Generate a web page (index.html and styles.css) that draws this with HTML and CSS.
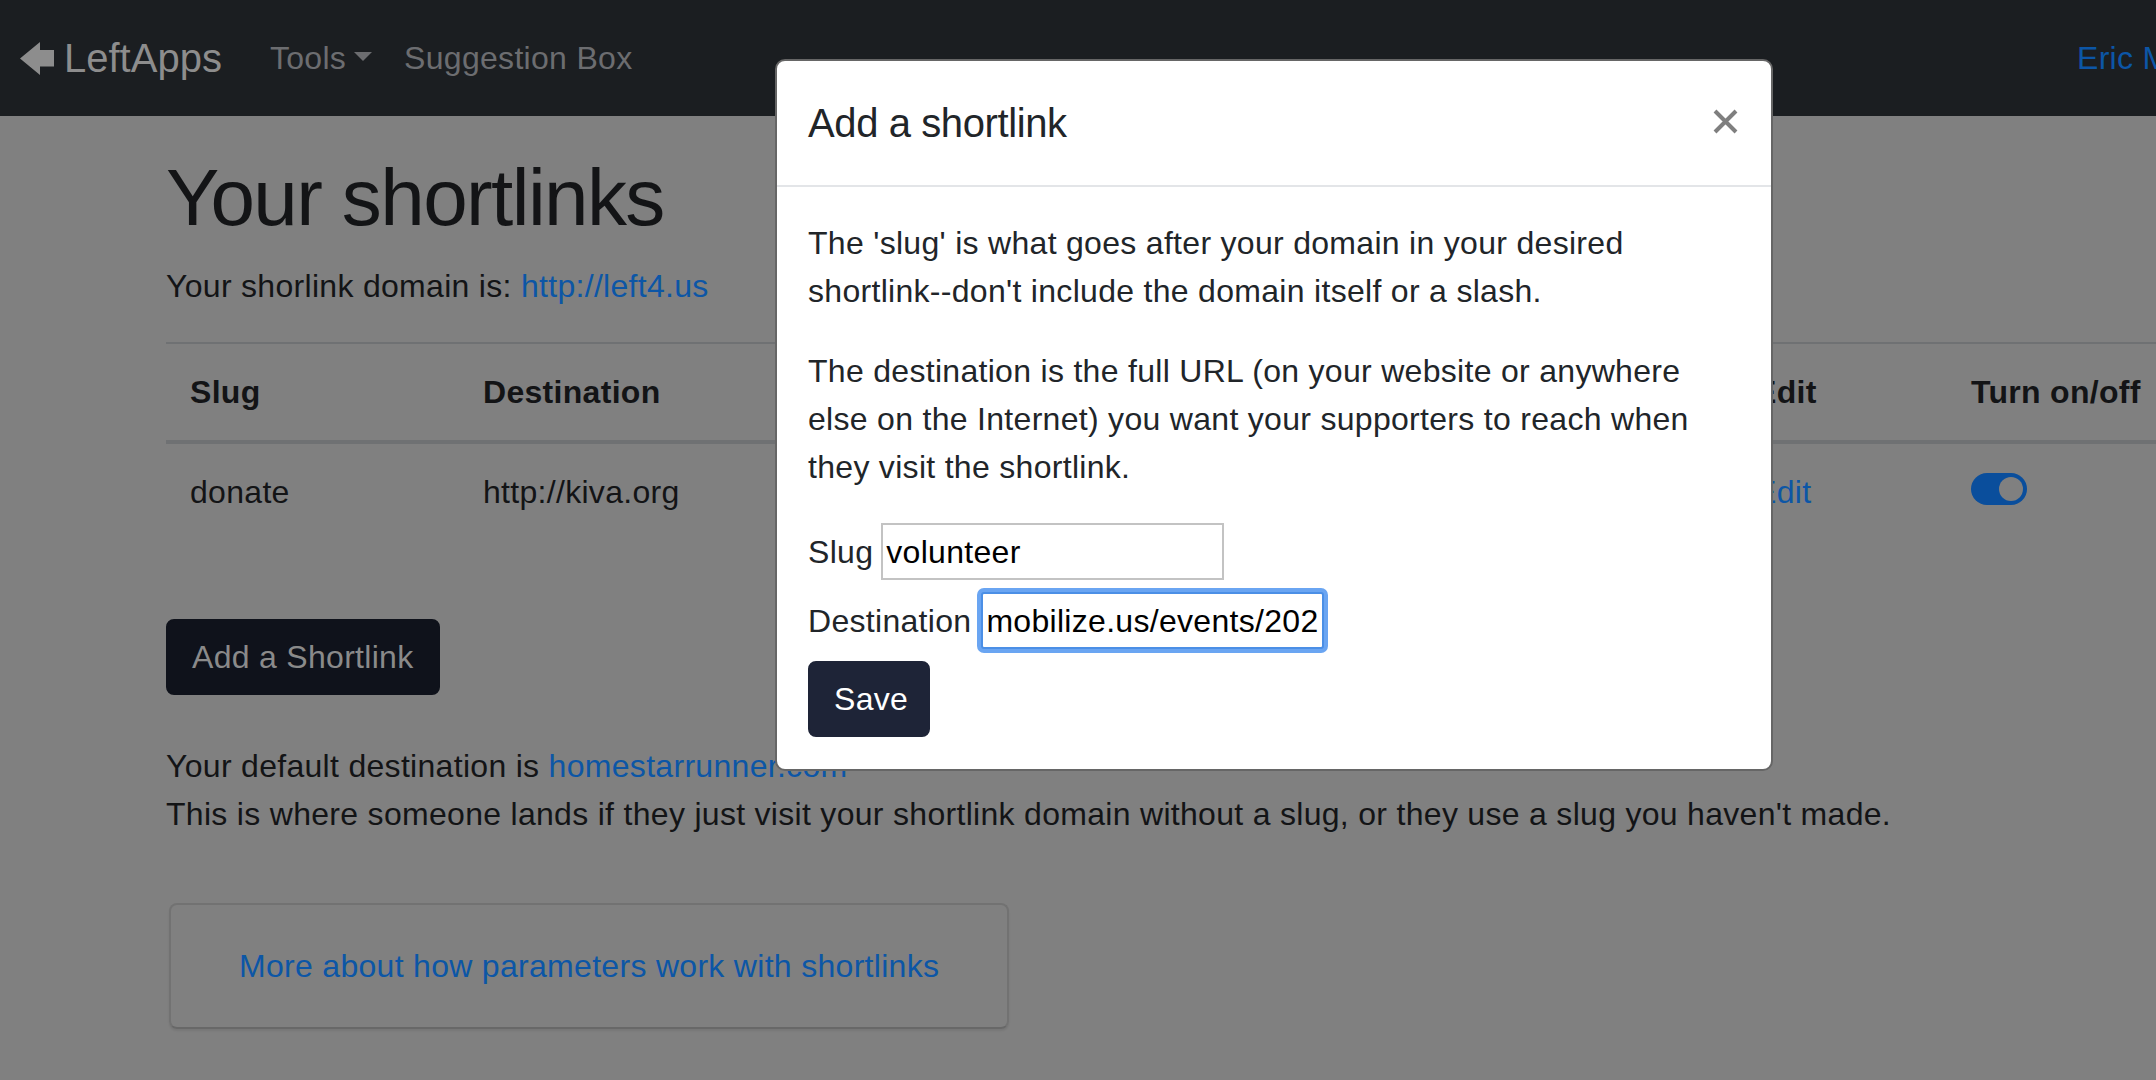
FILE: index.html
```html
<!DOCTYPE html>
<html lang="en">
<head>
<meta charset="utf-8">
<title>Your shortlinks – LeftApps</title>
<link rel="stylesheet" href="styles.css">
</head>
<body>
<nav class="navbar">
  <a class="brand" href="#">
    <svg class="brand-icon" viewBox="0 0 34 33" width="34" height="33" aria-hidden="true"><polygon points="0,16.5 20,0 20,8 34,8 34,24.5 20,24.5 20,33"/></svg>
    <span>LeftApps</span>
  </a>
  <a class="nav-link dropdown-toggle" href="#">Tools</a>
  <a class="nav-link" href="#">Suggestion Box</a>
  <a class="nav-user" href="#">Eric M</a>
</nav>

<main class="container">
  <h1 class="title">Your shortlinks</h1>
  <p class="domain">Your shorlink domain is: <a class="link" href="#">http://left4.us</a></p>

  <table class="links-table">
    <colgroup>
      <col class="col-slug">
      <col class="col-dest">
      <col class="col-edit">
      <col class="col-toggle">
    </colgroup>
    <thead>
      <tr>
        <th>Slug</th>
        <th>Destination</th>
        <th>Edit</th>
        <th>Turn on/off</th>
      </tr>
    </thead>
    <tbody>
      <tr>
        <td>donate</td>
        <td>http://kiva.org</td>
        <td><a class="link" href="#">Edit</a></td>
        <td><span class="switch"><span class="knob"></span></span></td>
      </tr>
    </tbody>
  </table>

  <div class="actions"><button class="btn btn-dim" type="button">Add a Shortlink</button></div>

  <p class="default-dest">Your default destination is <a class="link" href="#">homestarrunner.com</a><br>This is where someone lands if they just visit your shortlink domain without a slug, or they use a slug you haven't made.</p>

  <div class="info-card"><a class="link" href="#">More about how parameters work with shortlinks</a></div>
</main>

<div class="modal" role="dialog" aria-labelledby="modal-title">
  <div class="modal-header">
    <h5 class="modal-title" id="modal-title">Add a shortlink</h5>
    <button class="close" type="button" aria-label="Close">
      <svg width="25" height="25" viewBox="0 0 25 25" aria-hidden="true"><path d="M2 2L23 23M23 2L2 23" stroke="#7f7f7f" stroke-width="4"/></svg>
    </button>
  </div>
  <div class="modal-body">
    <p>The 'slug' is what goes after your domain in your desired shortlink--don't include the domain itself or a slash.</p>
    <p>The destination is the full URL (on your website or anywhere else on the Internet) you want your supporters to reach when they visit the shortlink.</p>
    <form class="form">
      <div class="form-row"><label for="slug">Slug</label><input class="input" id="slug" type="text" value="volunteer"></div>
      <div class="form-row"><label for="dest">Destination</label><input class="input input-focus" id="dest" type="text" value="mobilize.us/events/202"></div>
      <div class="form-row"><button class="btn btn-save" type="button">Save</button></div>
    </form>
  </div>
</div>
</body>
</html>
```

FILE: styles.css
```css
html, body {
  margin: 0;
  padding: 0;
  overflow: hidden;
}

body {
  background: #808080;
  font-family: "Liberation Sans", Arial, sans-serif;
  font-size: 32px;
  line-height: 48px;
  letter-spacing: 0.3px;
  color: #131416;
  width: 2156px;
  height: 1080px;
}

a {
  text-decoration: none;
}

.link {
  color: #0c56a6;
}

/* ---------- navbar ---------- */
.navbar {
  display: flex;
  align-items: center;
  box-sizing: border-box;
  width: 2200px;
  height: 116px;
  padding: 0 0 0 20px;
  background: #1b1e21;
}

.brand {
  display: flex;
  align-items: center;
  gap: 10px;
  margin-right: 32px;
  font-size: 40px;
  line-height: 60px;
  letter-spacing: 0;
  color: #8d8d8d;
}

.brand-icon {
  fill: #8d8d8d;
  display: block;
}

.nav-link {
  padding: 0 16px;
  color: #6c6d70;
}

.dropdown-toggle::after {
  content: "";
  display: inline-block;
  margin-left: 8px;
  vertical-align: 8px;
  border-top: 9.6px solid #6c6d70;
  border-left: 9.6px solid transparent;
  border-right: 9.6px solid transparent;
}

.nav-user {
  margin-left: auto;
  width: 123px;
  white-space: nowrap;
  color: #0c56a6;
}

/* ---------- main ---------- */
.container {
  padding: 34px 0 0 166px;
}

.title {
  margin: 0 0 16px;
  font-size: 80px;
  line-height: 96px;
  font-weight: 400;
  letter-spacing: -1.6px;
}

.domain {
  margin: 0 0 32px;
}

.links-table {
  table-layout: fixed;
  width: 2101px;
  border-collapse: separate;
  border-spacing: 0;
  margin-bottom: 79px;
}

.col-slug { width: 293px; }
.col-dest { width: 1272px; }
.col-edit { width: 216px; }
.col-toggle { width: 320px; }

.links-table th {
  padding: 24px;
  text-align: left;
  font-weight: 700;
  white-space: nowrap;
  border-top: 2px solid #6f7173;
  border-bottom: 4px solid #6f7173;
}

.links-table td {
  padding: 24px;
  vertical-align: top;
  white-space: nowrap;
}

.switch {
  display: inline-flex;
  justify-content: flex-end;
  align-items: center;
  box-sizing: border-box;
  width: 56px;
  height: 32px;
  margin-top: 5px;
  padding: 0 4px;
  border-radius: 16px;
  background: #0a4e9c;
  vertical-align: top;
}

.knob {
  width: 24px;
  height: 24px;
  border-radius: 50%;
  background: #808080;
}

.actions {
  margin-bottom: 47px;
}

.btn {
  display: inline-block;
  box-sizing: border-box;
  height: 76px;
  padding: 12px 24px;
  border-radius: 8px;
  font-family: inherit;
  font-size: 32px;
  line-height: 48px;
  letter-spacing: 0.3px;
  cursor: pointer;
}

.btn-dim {
  background: #0f121b;
  border: 2px solid #0f121b;
  color: #8a8a8a;
}

.default-dest {
  margin: 0 0 65px;
}

.info-card {
  display: inline-block;
  margin-left: 3px;
  padding: 37px 68px;
  border: 2px solid #727272;
  border-bottom-color: #686868;
  border-radius: 8px;
  box-shadow: 0 2px 2px rgba(0, 0, 0, 0.08);
  text-align: center;
}

/* ---------- modal ---------- */
.modal {
  position: fixed;
  top: 59px;
  left: 775px;
  width: 998px;
  box-sizing: border-box;
  background: #fff;
  border: 2px solid #666;
  border-radius: 10px;
  color: #212529;
  z-index: 10;
}

.modal-header {
  display: flex;
  justify-content: space-between;
  align-items: flex-start;
  padding: 32px 33px 32px 31px;
  border-bottom: 2px solid #e3e5e8;
}

.modal-title {
  margin: 0;
  font-size: 40px;
  line-height: 60px;
  font-weight: 400;
  letter-spacing: -0.4px;
}

.close {
  display: flex;
  align-items: center;
  height: 60px;
  margin-top: -2px;
  padding: 0;
  border: 0;
  background: transparent;
  cursor: pointer;
}

.modal-body {
  padding: 32px 32px 32px 31px;
}

.modal-body p {
  margin: 0 0 32px;
}

.form {
  display: flex;
  flex-direction: column;
  gap: 12px;
}

.form-row {
  display: flex;
  align-items: center;
  gap: 8px;
}

.input {
  box-sizing: border-box;
  width: 343px;
  height: 57px;
  padding: 1px 3px 0;
  border: 2px solid #c3c3c3;
  border-radius: 0;
  background: #fff;
  color: #000;
  font-family: inherit;
  font-size: 32px;
  letter-spacing: 0.3px;
  outline: none;
}

.input-focus {
  margin-left: 2px;
  border-color: #4b8fe6;
  border-radius: 3px;
  box-shadow: 0 0 0 4px #6aa5f2;
}

.btn-save {
  width: 122px;
  background: #1e2437;
  border: 2px solid #1e2437;
  color: #fff;
}
```
